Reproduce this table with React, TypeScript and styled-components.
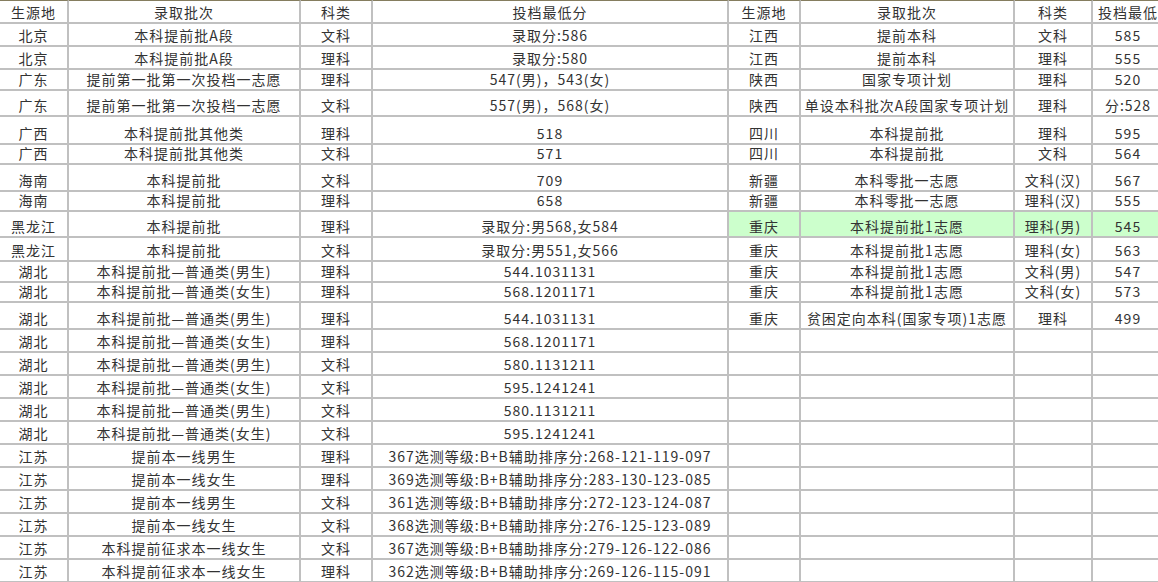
import React from 'react';
import styled, { createGlobalStyle } from 'styled-components';

const GlobalStyle = createGlobalStyle`
  html, body {
    margin: 0;
    padding: 0;
    background: #fff;
    overflow: hidden;
  }
`;

const COLS = [69, 232, 72, 356, 72, 214, 78, 72];
// header + 24 data rows, each height includes the 2px bottom rule
const ROWS = [24, 23, 23, 21, 26, 28, 20, 27, 20, 26, 24, 21, 20, 27, 23, 23, 23, 23, 23, 23, 23, 23, 23, 23, 23];

const Sheet = styled.div<{ $cols: string; $rows: string }>`
  display: grid;
  grid-template-columns: ${(p) => p.$cols};
  grid-template-rows: ${(p) => p.$rows};
  width: max-content;
  font-family: 'Noto Sans CJK SC', 'Liberation Sans', sans-serif;
  font-size: 14px;
  letter-spacing: 1px;
  color: #333;
`;

const Cell = styled.div<{ $head?: boolean; $hl?: boolean; $left?: boolean }>`
  box-sizing: border-box;
  display: flex;
  align-items: flex-end;
  justify-content: ${(p) => (p.$left ? 'flex-start' : 'center')};
  padding: 0 0 1px ${(p) => (p.$left ? '5px' : '0')};
  line-height: 18px;
  white-space: nowrap;
  overflow: visible;
  background: ${(p) => (p.$hl ? '#ccffcc' : '#fff')};
  border-right: 2px solid #c0c0c0;
  border-bottom: 2px solid #c0c0c0;
  border-top: ${(p) => (p.$head ? '1px solid #857d5f' : 'none')};
`;

const HEAD = ['生源地', '录取批次', '科类', '投档最低分'];

const LEFT: string[][] = [
  ['北京', '本科提前批A段', '文科', '录取分:586'],
  ['北京', '本科提前批A段', '理科', '录取分:580'],
  ['广东', '提前第一批第一次投档一志愿', '理科', '547(男)，543(女)'],
  ['广东', '提前第一批第一次投档一志愿', '文科', '557(男)，568(女)'],
  ['广西', '本科提前批其他类', '理科', '518'],
  ['广西', '本科提前批其他类', '文科', '571'],
  ['海南', '本科提前批', '文科', '709'],
  ['海南', '本科提前批', '理科', '658'],
  ['黑龙江', '本科提前批', '理科', '录取分:男568,女584'],
  ['黑龙江', '本科提前批', '文科', '录取分:男551,女566'],
  ['湖北', '本科提前批—普通类(男生)', '理科', '544.1031131'],
  ['湖北', '本科提前批—普通类(女生)', '理科', '568.1201171'],
  ['湖北', '本科提前批—普通类(男生)', '理科', '544.1031131'],
  ['湖北', '本科提前批—普通类(女生)', '理科', '568.1201171'],
  ['湖北', '本科提前批—普通类(男生)', '文科', '580.1131211'],
  ['湖北', '本科提前批—普通类(女生)', '文科', '595.1241241'],
  ['湖北', '本科提前批—普通类(男生)', '文科', '580.1131211'],
  ['湖北', '本科提前批—普通类(女生)', '文科', '595.1241241'],
  ['江苏', '提前本一线男生', '理科', '367选测等级:B+B辅助排序分:268-121-119-097'],
  ['江苏', '提前本一线女生', '理科', '369选测等级:B+B辅助排序分:283-130-123-085'],
  ['江苏', '提前本一线男生', '文科', '361选测等级:B+B辅助排序分:272-123-124-087'],
  ['江苏', '提前本一线女生', '文科', '368选测等级:B+B辅助排序分:276-125-123-089'],
  ['江苏', '本科提前征求本一线女生', '文科', '367选测等级:B+B辅助排序分:279-126-122-086'],
  ['江苏', '本科提前征求本一线女生', '理科', '362选测等级:B+B辅助排序分:269-126-115-091'],
];

const RIGHT: string[][] = [
  ['江西', '提前本科', '文科', '585'],
  ['江西', '提前本科', '理科', '555'],
  ['陕西', '国家专项计划', '理科', '520'],
  ['陕西', '单设本科批次A段国家专项计划', '理科', '分:528'],
  ['四川', '本科提前批', '理科', '595'],
  ['四川', '本科提前批', '文科', '564'],
  ['新疆', '本科零批一志愿', '文科(汉)', '567'],
  ['新疆', '本科零批一志愿', '理科(汉)', '555'],
  ['重庆', '本科提前批1志愿', '理科(男)', '545'],
  ['重庆', '本科提前批1志愿', '理科(女)', '563'],
  ['重庆', '本科提前批1志愿', '文科(男)', '547'],
  ['重庆', '本科提前批1志愿', '文科(女)', '573'],
  ['重庆', '贫困定向本科(国家专项)1志愿', '理科', '499'],
];

const HIGHLIGHT_ROW = 8;

const App: React.FC = () => {
  const blank = ['', '', '', ''];
  return (
    <>
      <GlobalStyle />
      <Sheet
        $cols={COLS.map((c) => `${c}px`).join(' ')}
        $rows={ROWS.map((r) => `${r}px`).join(' ')}
      >
        {[...HEAD, ...HEAD].map((h, i) => (
          <Cell key={`h${i}`} $head $left={i === 7}>
            {h}
          </Cell>
        ))}
        {LEFT.map((row, r) => {
          const right = RIGHT[r] || blank;
          return (
            <React.Fragment key={r}>
              {row.map((t, c) => (
                <Cell key={`l${c}`}>{t}</Cell>
              ))}
              {right.map((t, c) => (
                <Cell key={`r${c}`} $hl={r === HIGHLIGHT_ROW}>
                  {t}
                </Cell>
              ))}
            </React.Fragment>
          );
        })}
      </Sheet>
    </>
  );
};

export default App;
